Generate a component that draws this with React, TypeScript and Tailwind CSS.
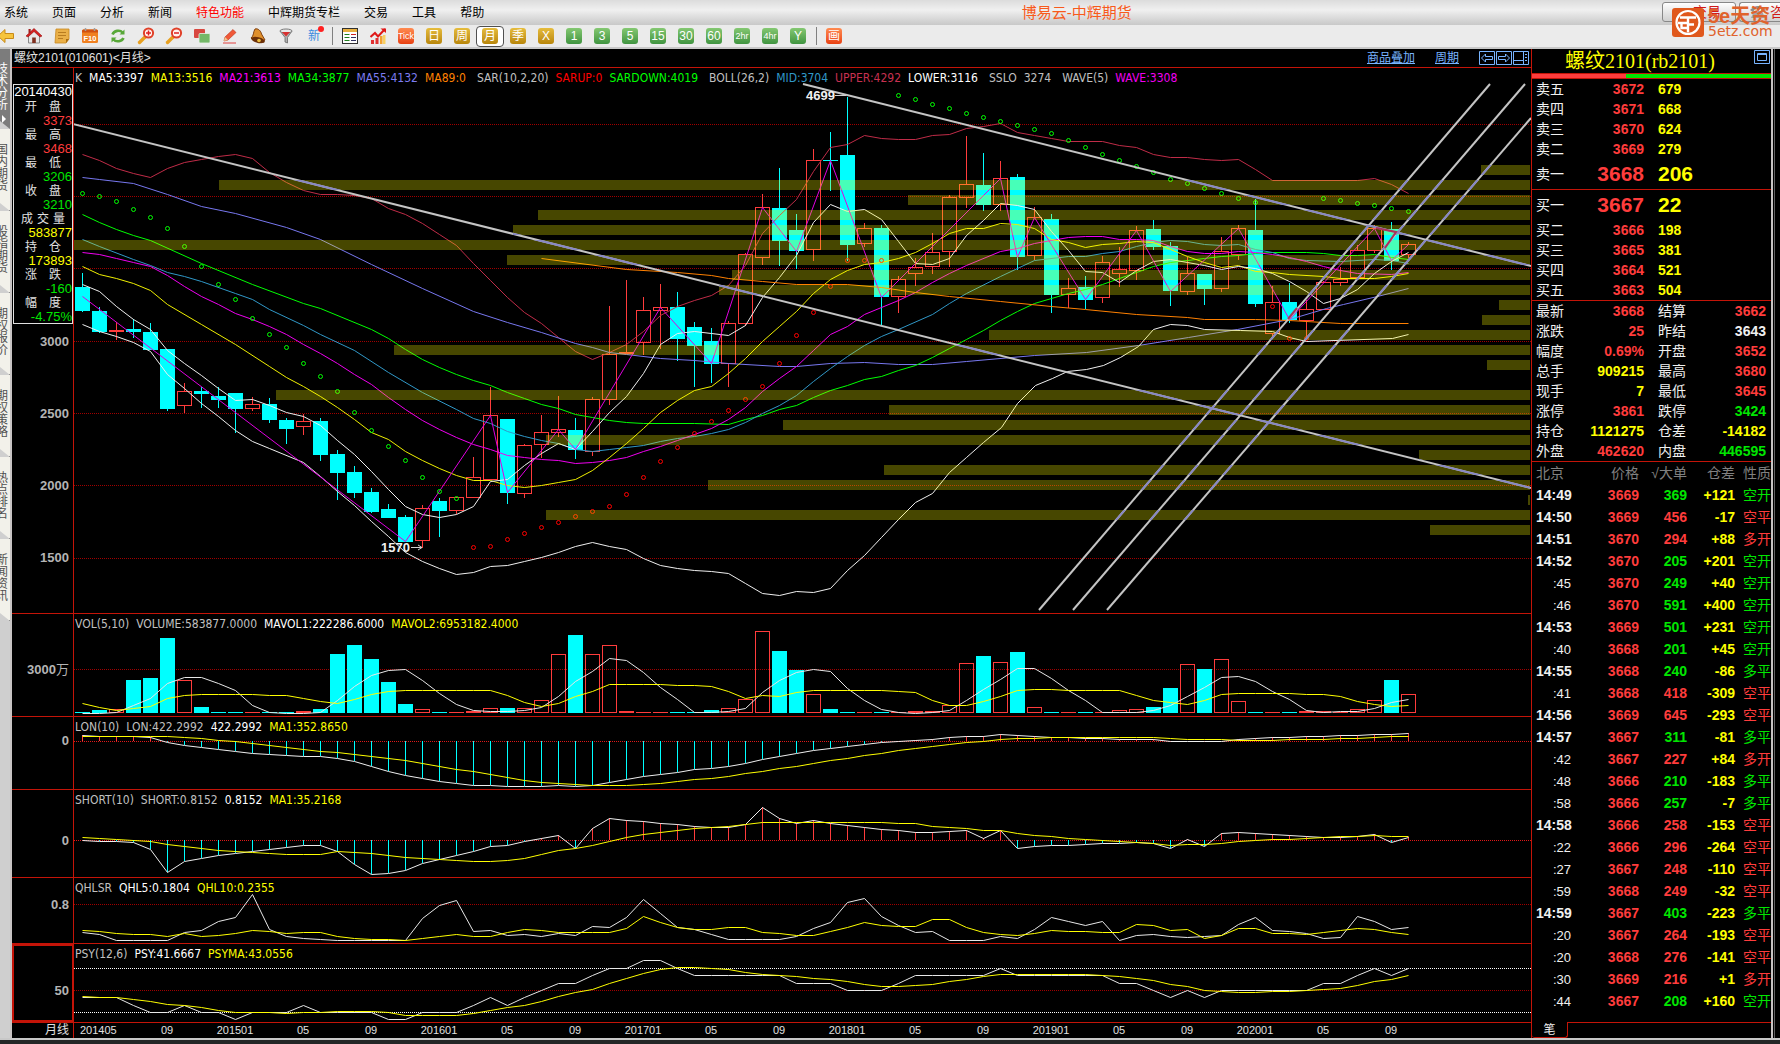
import { ReactNode } from 'react';
import clsx from 'clsx';

type Tone = 'red' | 'green' | 'yellow' | 'white' | 'gray';

interface Legend {
  text: string;
  color: string;
}

// [high, body top, body bottom, low, up = 1 / down = 0]
type Candle = [number, number, number, number, 0 | 1];

const tones: Record<Tone, string> = {
  red: 'text-[#ff3c3c]',
  green: 'text-[#00e600]',
  yellow: 'text-[#ffff00]',
  white: 'text-[#f0f0f0]',
  gray: 'text-[#808080]',
};

const LEFT = 74;
const WIDTH = 1457;
const UP = '#ff3c3c';
const DOWN = '#00ffff';

const xAt = (i: number) => 82 + i * 17;
const toPoints = (ys: number[]) => ys.map((y, i) => `${xAt(i)},${y}`).join(' ');

const candles: Candle[] = [
  [273, 287, 311, 312, 0], [307, 311, 332, 333, 0], [322, 330, 332, 340, 1], [319, 329, 332, 338, 0],
  [323, 332, 350, 350, 0], [349, 349, 409, 411, 0], [383, 391, 406, 413, 1], [387, 391, 394, 408, 0],
  [387, 396, 400, 408, 0], [393, 393, 409, 433, 0], [397, 404, 409, 411, 1], [398, 404, 420, 423, 0],
  [418, 420, 429, 444, 0], [414, 421, 427, 435, 1], [418, 421, 455, 461, 0], [450, 454, 473, 500, 0],
  [466, 472, 493, 498, 0], [488, 492, 512, 513, 0], [504, 509, 518, 518, 0], [515, 517, 542, 542, 0],
  [505, 508, 541, 548, 1], [498, 501, 511, 537, 0], [497, 497, 511, 514, 1], [457, 477, 498, 498, 1],
  [387, 415, 480, 480, 1], [419, 419, 493, 504, 0], [444, 445, 494, 498, 1], [415, 432, 445, 458, 1],
  [396, 429, 433, 437, 1], [418, 430, 450, 459, 0], [397, 399, 452, 456, 1], [306, 354, 400, 405, 1],
  [280, 352, 354, 354, 1], [297, 310, 343, 355, 1], [284, 307, 311, 349, 1], [292, 307, 339, 361, 0],
  [322, 327, 346, 387, 0], [328, 341, 364, 383, 0], [321, 323, 364, 387, 1], [253, 254, 324, 326, 1],
  [194, 207, 258, 265, 1], [168, 208, 241, 266, 0], [214, 230, 251, 269, 0], [149, 160, 250, 261, 1],
  [132, 160, 161, 191, 0], [97, 155, 245, 261, 0], [223, 228, 244, 247, 1], [225, 228, 297, 325, 0],
  [276, 279, 297, 313, 1], [258, 267, 274, 286, 1], [233, 252, 267, 274, 1], [195, 197, 252, 267, 1],
  [136, 184, 198, 208, 1], [153, 185, 205, 211, 0], [161, 178, 205, 211, 1], [174, 177, 257, 270, 0],
  [207, 217, 256, 260, 1], [214, 219, 295, 313, 0], [278, 288, 295, 308, 1], [276, 287, 300, 309, 0],
  [256, 262, 298, 303, 1], [247, 269, 274, 287, 1], [226, 230, 271, 280, 1], [220, 229, 247, 250, 0],
  [242, 246, 291, 306, 0], [257, 273, 292, 295, 1], [274, 274, 289, 305, 0], [237, 251, 289, 292, 1],
  [225, 228, 255, 260, 1], [199, 230, 304, 307, 0], [286, 302, 334, 337, 1], [283, 302, 320, 323, 0],
  [300, 309, 321, 338, 1], [281, 282, 310, 310, 1], [267, 279, 283, 286, 1], [245, 250, 278, 278, 1],
  [225, 228, 251, 253, 1], [222, 229, 261, 270, 0], [242, 244, 255, 258, 1],
];

const profile: [number, number][] = [
  [165, 1481], [180, 219], [195, 908], [210, 538], [225, 513], [240, 74], [255, 507], [270, 732],
  [285, 719], [300, 1499], [315, 1482], [330, 989], [345, 394], [360, 1487], [390, 276], [405, 889],
  [420, 783], [435, 546], [450, 1419], [465, 884], [480, 708], [495, 1528], [510, 546], [525, 1430],
];

const priceLines: { name: string; color: string; points: string }[] = [
  {
    name: 'upper',
    color: '#c02c48',
    points:
      '82,154 99,160 116,168 133,173 150,177 167,168 184,162 201,159 218,156 235,154 252,158 269,172 286,182 303,190 320,194 337,194 354,195 371,198 388,208 405,214 422,223 439,234 456,245 473,263 490,280 507,297 524,312 541,323 558,337 575,351 592,359 609,352 626,344 643,331 660,315 677,306 694,300 711,295 728,285 745,265 762,233 779,215 796,199 813,171 830,147 847,144 864,135 881,138 898,139 915,139 932,135 949,134 966,128 983,126 1000,123 1017,132 1034,135 1051,138 1068,141 1102,141 1119,145 1136,147 1153,154 1170,157 1187,157 1204,159 1221,160 1238,159 1255,169 1272,180 1357,180 1374,178 1391,184 1408,193',
  },
  {
    name: 'ma55',
    color: '#7878f0',
    points:
      '82,177 99,179 133,183 167,194 201,206 235,213 286,227 320,239 371,264 422,288 473,311 507,322 541,332 575,343 592,347 609,352 626,354 660,358 694,360 728,363 779,366 796,366 830,363 864,362 898,364 932,364 966,361 1034,355 1086,352 1138,345 1188,337 1237,329 1289,319 1326,308 1343,304 1377,296 1408,288',
  },
  {
    name: 'ma34',
    color: '#00ff00',
    points:
      '82,214 99,222 116,229 133,235 150,240 201,263 252,284 303,303 320,308 371,329 388,338 405,349 422,359 439,367 456,374 473,380 490,385 507,392 524,398 541,404 558,408 575,414 592,417 609,420 626,422 643,423 694,423 728,424 745,419 762,415 779,409 796,405 813,397 830,390 847,385 864,379 881,376 898,370 915,365 932,357 949,348 966,339 983,330 1000,320 1017,311 1034,303 1051,298 1068,293 1085,289 1102,284 1119,278 1136,272 1153,266 1170,262 1187,260 1204,258 1221,256 1238,255 1255,253 1272,252 1306,252 1323,253 1340,255 1357,255 1374,254 1391,257 1408,259',
  },
  {
    name: 'mid',
    color: '#3098c8',
    points:
      '82,239 99,246 133,259 150,265 167,272 184,276 201,281 235,293 252,299 269,309 303,325 320,334 354,350 388,372 422,392 456,409 473,418 490,423 507,431 524,436 541,440 558,443 575,449 592,451 609,449 626,447 643,445 660,441 677,438 694,436 711,433 728,429 745,422 762,413 779,405 796,395 813,381 830,368 847,356 864,345 881,336 898,329 932,314 949,303 966,293 1000,276 1034,260 1068,256 1085,256 1102,253 1119,251 1136,246 1153,242 1170,240 1187,241 1204,244 1221,245 1238,244 1255,249 1272,252 1289,258 1306,260 1340,261 1374,259 1391,260 1408,263',
  },
  {
    name: 'ma21',
    color: '#f000f0',
    points:
      '82,252 99,254 116,258 133,262 150,266 167,275 184,286 201,296 218,304 235,313 252,319 269,326 286,334 303,344 320,353 337,363 354,374 371,384 388,397 405,409 422,420 439,429 456,437 473,444 490,449 507,455 524,457 541,459 558,460 575,463 592,462 609,460 626,457 643,451 660,446 677,440 694,434 711,428 728,419 745,407 762,391 779,378 796,366 813,350 830,334 847,326 864,314 881,307 898,300 915,292 932,282 949,273 966,265 1000,251 1017,248 1034,243 1051,240 1068,237 1085,236 1102,236 1119,239 1136,239 1153,240 1170,246 1187,251 1204,253 1221,253 1238,251 1255,252 1272,254 1289,257 1306,261 1323,266 1340,270 1357,273 1391,274 1408,272',
  },
  {
    name: 'ma13',
    color: '#f0f000',
    points:
      '82,266 99,274 116,278 133,283 150,290 167,304 201,324 235,344 269,366 286,377 303,386 320,396 337,407 354,419 371,432 388,439 405,451 422,460 439,468 456,475 473,480 490,480 507,485 524,487 541,485 558,482 575,479 592,470 609,457 626,443 643,428 660,412 677,400 694,390 711,386 728,373 745,358 762,341 779,326 796,311 813,293 830,279 847,270 864,264 881,262 898,258 915,252 932,243 949,233 966,228 983,228 1000,223 1017,224 1034,228 1051,239 1068,242 1085,247 1102,244 1119,243 1136,241 1153,242 1170,249 1187,256 1204,262 1221,267 1238,265 1255,271 1272,272 1289,274 1323,276 1340,278 1374,278 1391,276 1408,273',
  },
  {
    name: 'ma5',
    color: '#f0f0f0',
    points:
      '82,284 99,291 116,306 133,319 150,329 167,350 184,363 201,375 218,388 235,400 252,399 269,405 286,412 303,416 320,425 337,440 354,454 371,471 388,489 405,506 422,514 439,517 456,514 473,506 490,481 507,479 524,465 541,453 558,443 575,449 592,431 609,412 626,396 643,373 660,344 677,333 694,331 711,333 728,335 745,325 762,297 779,277 796,255 813,222 830,204 847,211 864,209 881,219 898,241 915,263 932,264 949,258 966,235 983,220 1000,203 1017,205 1034,209 1051,231 1068,250 1085,271 1102,272 1119,282 1136,270 1153,261 1170,259 1187,262 1204,265 1221,269 1238,266 1255,268 1272,273 1289,281 1306,291 1323,303 1340,298 1357,289 1374,273 1391,261 1408,252',
  },
  {
    name: 'lower',
    color: '#f0f0f0',
    points:
      '82,324 99,331 116,336 133,342 150,351 167,374 184,388 201,403 218,416 235,430 252,441 269,448 303,462 320,476 337,491 354,505 371,521 388,536 405,552 422,561 439,568 456,574 473,572 490,566 507,565 524,561 541,557 558,552 575,546 592,542 609,546 626,549 643,558 660,565 677,568 694,570 711,571 728,573 745,583 762,593 779,595 796,591 813,592 830,588 847,570 864,555 881,537 898,519 915,502 932,493 949,472 966,457 983,442 1001,427 1017,403 1035,385 1052,378 1067,371 1086,369 1103,365 1120,357 1138,346 1153,329 1170,324 1187,325 1204,329 1240,330 1272,331 1289,337 1306,341 1392,338 1408,334',
  },
  {
    name: 'ma89',
    color: '#ff8000',
    points:
      '541,258 626,269 677,272 711,275 728,278 762,281 796,284 847,284 881,287 915,292 949,296 1000,301 1051,306 1085,309 1136,314 1187,317 1204,319 1255,319 1289,320 1340,323 1408,323',
  },
  {
    name: 'wave',
    color: '#e000e0',
    points:
      '82,296 405,541 490,415 507,492 558,429 575,449 660,307 711,363 762,207 796,251 830,160 881,297 1000,178 1017,257 1034,217 1085,299 1136,230 1170,291 1238,228 1289,319 1374,228 1391,260 1408,244',
  },
];

const sarRuns: { start: number; color: string; ys: number[] }[] = [
  {
    start: 0,
    color: '#00ff00',
    ys: [193, 196, 201, 209, 217, 228, 246, 266, 284, 299, 318, 334, 347, 363, 376, 391, 412, 430, 446, 460, 477, 491, 498],
  },
  {
    start: 23,
    color: '#ff0000',
    ys: [547, 546, 539, 533, 527, 522, 516, 511, 506, 494, 477, 461, 447, 433, 421, 410, 399, 386, 363, 335, 312, 286, 260, 260, 260],
  },
  {
    start: 48,
    color: '#00ff00',
    ys: [95, 99, 104, 108, 113, 117, 121, 125, 129, 133, 140, 147, 154, 160, 166, 172, 179, 183, 188, 193, 198, 202],
  },
  { start: 70, color: '#ff0000', ys: [306, 338, 338] },
  { start: 73, color: '#00ff00', ys: [198, 200, 203, 205, 208, 211] },
];

const trendLines = [
  'M73 124L1531 488',
  'M803 84L1531 266',
  'M1039 610L1490 84',
  'M1073 610L1525 84',
  'M1107 610L1531 118',
];

const volumeTops = [
  712, 710, 709, 680, 678, 638, 680, 707, 712, 712, 712, 712, 712, 711, 709, 654, 645, 659, 682, 704, 709, 712, 712, 711, 708, 708,
  708, 700, 654, 635, 654, 645, 711, 712, 712, 712, 712, 710, 708, 699, 631, 651, 670, 694, 709, 712, 712, 712, 712, 711, 711, 705,
  663, 656, 662, 652, 707, 712, 712, 712, 712, 710, 709, 707, 688, 664, 669, 659, 701, 712, 712, 712, 711, 711, 712, 709, 700, 680, 694,
];
const mavol1 = [
  713, 713, 712, 705, 698, 683, 677, 677, 683, 690, 705, 712, 713, 713, 712, 700, 686, 675, 670, 669, 680, 693, 704, 710, 711, 711,
  710, 707, 696, 681, 671, 658, 660, 672, 687, 699, 712, 712, 711, 708, 692, 680, 672, 669, 671, 688, 700, 709, 712, 713, 712, 710,
  700, 689, 679, 668, 668, 678, 690, 700, 712, 712, 712, 710, 705, 696, 687, 677, 676, 681, 691, 699, 710, 712, 711, 711, 708, 702, 699,
];
const mavol2 = [
  703, 707, 710, 708, 706, 698, 695, 694, 694, 694, 694, 695, 695, 698, 701, 703, 699, 694, 691, 690, 690, 690, 690, 690, 690, 695,
  702, 706, 703, 696, 691, 684, 684, 684, 684, 685, 685, 686, 691, 698, 695, 696, 692, 690, 690, 690, 690, 690, 691, 692, 700, 705,
  705, 701, 696, 690, 689, 689, 690, 690, 690, 690, 695, 700, 702, 704, 700, 694, 693, 693, 693, 693, 694, 694, 696, 701, 704, 706, 705,
];
const lon = [
  735, 736, 736, 736, 737, 742, 745, 747, 749, 751, 753, 754, 755, 756, 756, 758, 761, 766, 771, 775, 778, 781, 783, 785, 785, 786,
  786, 786, 785, 786, 785, 782, 779, 776, 774, 772, 769, 768, 766, 763, 759, 756, 753, 750, 748, 746, 744, 742, 741, 740, 739, 737,
  736, 736, 734, 735, 736, 737, 737, 738, 738, 739, 739, 739, 741, 741, 741, 741, 739, 738, 737, 737, 736, 736, 735, 735, 734, 734, 733,
];
const lonMa = [
  736, 736, 736, 736, 736, 736, 737, 738, 740, 741, 743, 745, 747, 749, 751, 752, 754, 756, 758, 760, 763, 766, 769, 771, 774, 777,
  780, 782, 783, 784, 785, 785, 785, 784, 783, 781, 779, 778, 776, 773, 771, 768, 766, 763, 760, 758, 755, 753, 750, 748, 746, 744,
  742, 741, 739, 738, 738, 737, 737, 737, 737, 737, 737, 737, 738, 739, 739, 739, 740, 740, 740, 739, 739, 739, 738, 738, 737, 736, 736,
];
const short = [
  840, 841, 841, 842, 849, 872, 861, 858, 855, 853, 851, 849, 847, 845, 845, 851, 864, 874, 873, 870, 863, 859, 855, 851, 846, 845,
  841, 838, 835, 848, 828, 818, 820, 821, 823, 824, 826, 827, 827, 824, 807, 818, 823, 820, 823, 825, 827, 829, 830, 832, 832, 831,
  830, 838, 830, 848, 846, 845, 845, 844, 843, 843, 842, 843, 848, 839, 846, 833, 832, 833, 834, 835, 836, 837, 837, 836, 834, 842, 837,
];
const shortMa = [
  837, 838, 839, 840, 841, 844, 846, 848, 850, 851, 852, 853, 854, 854, 854, 851, 852, 853, 855, 857, 858, 859, 860, 861, 861, 860,
  858, 854, 850, 848, 845, 841, 837, 834, 832, 830, 828, 827, 826, 824, 822, 822, 822, 822, 822, 822, 822, 822, 823, 823, 826, 827,
  828, 830, 830, 833, 835, 836, 838, 839, 840, 841, 842, 843, 845, 844, 844, 843, 841, 840, 839, 839, 838, 837, 836, 836, 835, 836, 836,
];
const qhl5 = [
  932, 934, 940, 940, 940, 940, 932, 930, 921, 917, 894, 929, 936, 938, 939, 940, 940, 940, 940, 940, 918, 905, 900, 931, 930, 935,
  934, 936, 933, 935, 926, 927, 917, 899, 913, 927, 929, 934, 939, 939, 939, 939, 936, 928, 922, 902, 898, 916, 925, 932, 931, 940,
  940, 940, 936, 938, 929, 917, 921, 925, 921, 940, 935, 934, 936, 937, 936, 935, 924, 917, 930, 931, 933, 938, 937, 916, 921, 929, 927,
];
const qhl10 = [
  930, 931, 933, 934, 934, 936, 933, 936, 935, 933, 930, 931, 933, 932, 932, 936, 938, 939, 939, 940, 938, 936, 934, 936, 936, 932,
  929, 930, 932, 932, 932, 932, 928, 916, 922, 927, 929, 929, 927, 927, 932, 933, 935, 935, 931, 927, 922, 925, 926, 926, 919, 919,
  927, 932, 934, 935, 933, 930, 931, 931, 932, 932, 924, 925, 930, 929, 938, 935, 928, 928, 933, 933, 934, 932, 930, 928, 929, 932, 934,
];
const psy = [
  997, 997, 997, 1005, 1012, 1012, 1005, 1012, 1012, 1019, 1012, 1012, 1012, 1005, 1012, 1012, 1012, 1012, 1019, 1019, 1012, 1012,
  1012, 1005, 997, 1005, 997, 990, 983, 983, 975, 968, 968, 960, 960, 968, 975, 975, 975, 975, 975, 975, 983, 983, 983, 990, 990, 990,
  983, 975, 975, 975, 975, 975, 968, 975, 975, 975, 975, 975, 975, 983, 983, 990, 997, 990, 997, 990, 990, 990, 990, 990, 990, 983,
  983, 975, 968, 975, 968,
];
const psyMa = [
  996, 997, 997, 999, 1001, 1004, 1005, 1007, 1010, 1012, 1012, 1012, 1013, 1012, 1012, 1011, 1011, 1011, 1012, 1015, 1015, 1015,
  1015, 1013, 1010, 1007, 1005, 1001, 996, 992, 989, 983, 978, 973, 969, 967, 967, 968, 969, 972, 974, 975, 976, 978, 979, 981, 984,
  986, 986, 985, 984, 981, 979, 976, 974, 974, 974, 974, 974, 974, 975, 976, 978, 980, 984, 986, 990, 991, 992, 992, 991, 991, 990,
  989, 988, 985, 981, 979, 975,
];

const menus = ['系统', '页面', '分析', '新闻', '特色功能', '中辉期货专栏', '交易', '工具', '帮助'];

const sideTabs = ['国内期货', '股指期货', '期权报价', '期权策略', '热点排名', '新闻资讯'];

const infoRows: [string, string, Tone][] = [
  ['开盘', '3373', 'red'],
  ['最高', '3468', 'red'],
  ['最低', '3206', 'green'],
  ['收盘', '3210', 'green'],
  ['成交量', '583877', 'yellow'],
  ['持仓', '173893', 'yellow'],
  ['涨跌', '-160', 'green'],
  ['幅度', '-4.75%', 'green'],
];

const axisLabels = [
  '201405', '09', '201501', '05', '09', '201601', '05', '09', '201701', '05',
  '09', '201801', '05', '09', '201901', '05', '09', '202001', '05', '09',
];

const asks: [string, string, string][] = [
  ['卖五', '3672', '679'],
  ['卖四', '3671', '668'],
  ['卖三', '3670', '624'],
  ['卖二', '3669', '279'],
  ['卖一', '3668', '206'],
];

const bids: [string, string, string][] = [
  ['买一', '3667', '22'],
  ['买二', '3666', '198'],
  ['买三', '3665', '381'],
  ['买四', '3664', '521'],
  ['买五', '3663', '504'],
];

const quotes: [string, string, Tone, string, string, Tone][] = [
  ['最新', '3668', 'red', '结算', '3662', 'red'],
  ['涨跌', '25', 'red', '昨结', '3643', 'white'],
  ['幅度', '0.69%', 'red', '开盘', '3652', 'red'],
  ['总手', '909215', 'yellow', '最高', '3680', 'red'],
  ['现手', '7', 'yellow', '最低', '3645', 'red'],
  ['涨停', '3861', 'red', '跌停', '3424', 'green'],
  ['持仓', '1121275', 'yellow', '仓差', '-14182', 'yellow'],
  ['外盘', '462620', 'red', '内盘', '446595', 'green'],
];

const ticks: [string, string, string, string, string, Tone][] = [
  ['14:49', '3669', '369', '+121', '空开', 'green'],
  ['14:50', '3669', '456', '-17', '空平', 'red'],
  ['14:51', '3670', '294', '+88', '多开', 'red'],
  ['14:52', '3670', '205', '+201', '空开', 'green'],
  [':45', '3670', '249', '+40', '空开', 'green'],
  [':46', '3670', '591', '+400', '空开', 'green'],
  ['14:53', '3669', '501', '+231', '空开', 'green'],
  [':40', '3668', '201', '+45', '空开', 'green'],
  ['14:55', '3668', '240', '-86', '多平', 'green'],
  [':41', '3668', '418', '-309', '空平', 'red'],
  ['14:56', '3669', '645', '-293', '空平', 'red'],
  ['14:57', '3667', '311', '-81', '多平', 'green'],
  [':42', '3667', '227', '+84', '多开', 'red'],
  [':48', '3666', '210', '-183', '多平', 'green'],
  [':58', '3666', '257', '-7', '多平', 'green'],
  ['14:58', '3666', '258', '-153', '空平', 'red'],
  [':22', '3666', '296', '-264', '空平', 'red'],
  [':27', '3667', '248', '-110', '空平', 'red'],
  [':59', '3668', '249', '-32', '空平', 'red'],
  ['14:59', '3667', '403', '-223', '多平', 'green'],
  [':20', '3667', '264', '-193', '空平', 'red'],
  [':20', '3668', '276', '-141', '空平', 'red'],
  [':30', '3669', '216', '+1', '多开', 'red'],
  [':44', '3667', '208', '+160', '空开', 'green'],
];

const priceLegend: Legend[] = [
  { text: 'K', color: 'text-[#c0c0c0]' },
  { text: 'MA5:3397', color: 'text-white' },
  { text: 'MA13:3516', color: 'text-[#ffff00]' },
  { text: 'MA21:3613', color: 'text-[#ff00ff]' },
  { text: 'MA34:3877', color: 'text-[#00ff00]' },
  { text: 'MA55:4132', color: 'text-[#7c7cf0]' },
  { text: 'MA89:0', color: 'text-[#ff8000]' },
  { text: 'SAR(10,2,20)', color: 'text-[#c0c0c0] pl-1' },
  { text: 'SARUP:0', color: 'text-[#ff0000]' },
  { text: 'SARDOWN:4019', color: 'text-[#00ff00]' },
  { text: 'BOLL(26,2)', color: 'text-[#c0c0c0] pl-1' },
  { text: 'MID:3704', color: 'text-[#3098c8]' },
  { text: 'UPPER:4292', color: 'text-[#c83050]' },
  { text: 'LOWER:3116', color: 'text-white' },
  { text: 'SSLO', color: 'text-[#c0c0c0] pl-1' },
  { text: '3274', color: 'text-[#c0c0c0]' },
  { text: 'WAVE(5)', color: 'text-[#c0c0c0] pl-1' },
  { text: 'WAVE:3308', color: 'text-[#f000f0]' },
];

/* ---------- toolbar ---------- */

function ToolButton({ label, active, children }: { label: string; active?: boolean; children: ReactNode }) {
  return (
    <button
      aria-label={label}
      className={clsx(
        'w-7 h-[21px] shrink-0 flex items-center justify-center',
        active && 'bg-white border border-[#505050] rounded-sm'
      )}
    >
      {children}
    </button>
  );
}

function Separator() {
  return (
    <div className="w-2 h-[18px] shrink-0 flex justify-center">
      <div className="w-px bg-[#808080]" />
    </div>
  );
}

const chipColors = {
  gold: 'from-[#e6bc3c] to-[#b88608]',
  green: 'from-[#84c872] to-[#3f9440]',
  orange: 'from-[#ff8a50] to-[#e84010]',
};

function Chip({ text, color }: { text: string; color: keyof typeof chipColors }) {
  return (
    <span
      className={clsx(
        'size-4 rounded-[3px] bg-gradient-to-b text-white leading-4 text-center flex justify-center',
        chipColors[color],
        text.length > 2 ? 'text-[9px]' : 'text-[12px]'
      )}
    >
      {text}
    </span>
  );
}

function Magnifier({ plus }: { plus?: boolean }) {
  return (
    <svg viewBox="0 0 18 18" className="size-[18px]">
      <path d="M8 10L2.5 15.5" stroke="#e8a020" strokeWidth="3.4" strokeLinecap="round" />
      <circle cx="11.5" cy="6" r="4.6" fill="#fff4f0" stroke="#e04028" strokeWidth="2" />
      <path d={plus ? 'M9 6h5M11.500 3.500v5' : 'M9 6h5'} stroke="#e02020" strokeWidth="1.500" />
    </svg>
  );
}

function Toolbar() {
  return (
    <div className="h-6 shrink-0 bg-[#ebebeb] border-b-2 border-[#c8c8c8] flex items-center">
      <button aria-label="后退" className="w-5 shrink-0">
        <svg viewBox="0 0 16 16" className="w-4 h-4">
          <path d="M-2 8L5 1.500V5.500H13.500V10.500H5V14.500Z" fill="#f6c43c" stroke="#c88a18" />
        </svg>
      </button>
      <ToolButton label="首页">
        <svg viewBox="0 0 18 18" className="size-[18px]">
          <path d="M3.500 8.500L9 3.500l5.500 5V16h-11Z" fill="#e8e8e8" stroke="#888" />
          <path d="M1 9L9 1.500L17 9l-2 1L9 4.500L3 10Z" fill="#d82020" stroke="#901010" strokeWidth=".6" />
          <rect x="3.500" y="2" width="2.200" height="4" fill="#a02020" />
          <rect x="7.200" y="10.500" width="3.600" height="5.500" fill="#803020" />
        </svg>
      </ToolButton>
      <ToolButton label="便签">
        <svg viewBox="0 0 16 16" className="size-4">
          <path d="M2 1h13v10l-3 4H1Z" fill="#eab048" stroke="#c88820" strokeWidth=".8" />
          <path d="M15 11l-3 4v-4Z" fill="#a86c10" />
          <path d="M4 4.500h8M4 7.500h8M4 10.500h5" stroke="#b87c20" />
        </svg>
      </ToolButton>
      <ToolButton label="F10">
        <svg viewBox="0 0 16 16" className="size-4">
          <rect y="1.500" width="16" height="13.500" rx="1.500" fill="#f08020" />
          <path d="M0 3q0-1.500 1.500-1.500h13q1.500 0 1.500 1.500v1.500H0Z" fill="#d05010" />
          <path d="M3.500 0v3M12.500 0v3" stroke="#a0a0a0" strokeWidth="1.500" />
          <text x="8" y="12.500" textAnchor="middle" fontSize="7.500" fontWeight="700" fontFamily="Liberation Sans" fill="#fff">
            F10
          </text>
        </svg>
      </ToolButton>
      <ToolButton label="刷新">
        <svg viewBox="0 0 16 16" className="size-4" fill="none" stroke="#58a838" strokeWidth="2.600">
          <path d="M2.500 6.500C4 2.500 10 1.500 12.500 4.500" />
          <path d="M13.500 10C12 13.500 6 14.500 3.500 11.500" />
          <path d="M14.500 1.500v5h-5ZM1.500 14.500v-5h5Z" fill="#58a838" stroke="none" />
        </svg>
      </ToolButton>
      <ToolButton label="放大">
        <Magnifier plus />
      </ToolButton>
      <ToolButton label="缩小">
        <Magnifier />
      </ToolButton>
      <ToolButton label="叠加">
        <svg viewBox="0 0 16 16" className="size-4">
          <rect x="0" y="1" width="11" height="9" rx="1" fill="#d84840" />
          <rect x="5" y="5.500" width="11" height="9.500" rx="1" fill="#74b868" stroke="#e8f0e8" strokeWidth=".8" />
        </svg>
      </ToolButton>
      <ToolButton label="画线">
        <svg viewBox="0 0 16 16" className="size-4">
          <path d="M3 9L11 1.500L14 4.500L6 12L2 13Z" fill="#f05838" stroke="#b83018" strokeWidth=".6" />
          <path d="M3 9l3 3-4 1Z" fill="#f0c890" />
          <path d="M1 15h13" stroke="#e04040" />
        </svg>
      </ToolButton>
      <ToolButton label="预警">
        <svg viewBox="0 0 16 16" className="size-4">
          <path d="M5 1C8 0 11 3 11.500 6L15 12L9 15L1 10C4 8 3 4 5 1Z" fill="#e0902c" stroke="#804010" />
          <ellipse cx="8" cy="12" rx="7" ry="2.800" transform="rotate(14 8 12)" fill="#6c3008" />
          <circle cx="9" cy="12.500" r="1.800" fill="#f0c040" />
        </svg>
      </ToolButton>
      <ToolButton label="筛选">
        <svg viewBox="0 0 16 16" className="size-4">
          <path d="M2 3L7 9.500V14l2.500 1V9.500L14 3Z" fill="#b0b0b0" stroke="#686868" strokeWidth=".8" />
          <ellipse cx="8" cy="3" rx="6" ry="2" fill="#e8e8e8" stroke="#787878" />
          <path d="M4 4h8L8 8.500Z" fill="#d83030" />
        </svg>
      </ToolButton>
      <ToolButton label="新功能">
        <span className="relative text-[12px] leading-4 text-[#3c8ce0]">
          新
          <span className="absolute -top-0.5 -right-1 size-[6px] rounded-full bg-[#ff2020]" />
        </span>
      </ToolButton>
      <Separator />
      <ToolButton label="报价">
        <svg viewBox="0 0 16 16" className="size-4">
          <rect x=".5" y=".5" width="15" height="15" fill="#fff" stroke="#303030" />
          <path d="M1 2.500h14" stroke="#e8b040" strokeWidth="3" />
          <path d="M2.500 6.500h5M2.500 9.500h5M2.500 12.500h5" stroke="#208020" />
          <path d="M9 6.500h5" stroke="#d02020" />
          <path d="M9 9.500h5M9 12.500h5" stroke="#303060" />
        </svg>
      </ToolButton>
      <ToolButton label="走势">
        <svg viewBox="0 0 16 16" className="size-4">
          <path d="M1 16v-4h3v4ZM5.500 16v-6h3v6Z" fill="#e03030" />
          <path d="M10 16v-8h2.500v8Z" fill="#f0a030" />
          <path d="M13 16v-9h2.500v9Z" fill="#f8d060" />
          <path d="M.5 9L5 5l3 3.500L15 1" fill="none" stroke="#e01818" strokeWidth="2" />
          <path d="M10.500.5H16V5Z" fill="#e01818" />
        </svg>
      </ToolButton>
      <ToolButton label="Tick"><Chip text="Tick" color="orange" /></ToolButton>
      <ToolButton label="日线"><Chip text="日" color="gold" /></ToolButton>
      <ToolButton label="周线"><Chip text="周" color="gold" /></ToolButton>
      <ToolButton label="月线" active><Chip text="月" color="gold" /></ToolButton>
      <ToolButton label="季线"><Chip text="季" color="gold" /></ToolButton>
      <ToolButton label="自定义日"><Chip text="X" color="gold" /></ToolButton>
      {['1', '3', '5', '15', '30', '60', '2hr', '4hr', 'Y'].map((t) => (
        <ToolButton key={t} label={t}>
          <Chip text={t} color="green" />
        </ToolButton>
      ))}
      <Separator />
      <ToolButton label="画面"><Chip text="画" color="orange" /></ToolButton>
    </div>
  );
}

function MenuBar() {
  return (
    <header className="relative h-[25px] shrink-0 flex items-center bg-gradient-to-b from-[#dcdcdc] via-[#f0f0f0] via-40% to-[#c8c8c8]">
      <nav className="flex gap-6 pl-1 text-[12px]">
        {menus.map((m) => (
          <button key={m} className={m === '特色功能' ? 'text-[#ff0000]' : 'text-black'}>
            {m}
          </button>
        ))}
      </nav>
      <h1 className="absolute left-[57.400%] text-[15px] leading-6 text-[#f85a1c]">博易云-中辉期货</h1>
      <div className="absolute right-0 top-0.5 flex gap-[3px] text-[14px] leading-[18px] text-[#d01818]">
        <button className="w-[74px] h-5 border border-[#888] rounded-[3px] bg-gradient-to-b from-white to-[#d0d0d0] pl-4">交易</button>
        <button className="w-[41px] h-5 pl-2.5 border border-r-0 border-[#888] rounded-l-[3px] bg-gradient-to-b from-white to-[#d0d0d0] flex items-center gap-1 overflow-hidden whitespace-nowrap">
          <svg viewBox="0 0 16 16" className="size-4 shrink-0">
            <path d="M0 6Q8-2 16 6L13 8L11 5H5L3 8Z" fill="#8c8c8c" />
            <path d="M4 7h8l3 7H1Z" fill="#a4a4a4" />
          </svg>
          咨询
        </button>
      </div>
      {/* watermark logo */}
      <div className="absolute right-1 top-2 z-10 flex gap-1 text-[#e0622c]">
        <svg viewBox="0 0 32 29" className="w-8 h-[29px]">
          <rect width="32" height="29" rx="3" fill="#e0581c" />
          <circle cx="16" cy="14.500" r="11.500" fill="none" stroke="#fff" strokeWidth="2.200" />
          <path d="M8 9.500h16M16 9.500v15M6 15h10M16 16.500h6M9.500 15v5h6.500" fill="none" stroke="#fff" strokeWidth="2.400" />
        </svg>
        <div className="flex flex-col w-[68px]">
          <span className="text-[20px] leading-[17px] font-bold whitespace-nowrap">5e天资</span>
          <span className="text-[14px] leading-[13px] font-['DejaVu_Sans']">5etz.com</span>
        </div>
      </div>
    </header>
  );
}

function SideTabs() {
  return (
    <aside className="w-3 shrink-0 border-r-2 border-[#c8c4c4] bg-[#cfcfcf] text-[12px] leading-3 overflow-hidden">
      <button className="block w-[10px] h-20 pt-2 bg-[#7c7c7c] text-white [clip-path:polygon(0_0,100%_0,100%_100%,0_calc(100%-8px))]">
        <span className="block w-3 -ml-1 break-all">技术分析</span>
        <svg viewBox="0 0 4 8" className="w-1 h-2 mt-1 ml-0.5"><path d="M0 0l4 4-4 4Z" fill="#fff" /></svg>
      </button>
      {sideTabs.map((t) => (
        <button
          key={t}
          className="block w-[10px] h-[82px] pb-1 bg-[#f2f1ea] text-[#505050] border-b border-[#606060] [clip-path:polygon(0_0,100%_0,100%_100%,0_calc(100%-8px))]"
        >
          <span className="block w-3 -ml-1 break-all">{t}</span>
        </button>
      ))}
    </aside>
  );
}

/* ---------- charts ---------- */

function Bar({ i, top, bottom, up }: { i: number; top: number; bottom: number; up: boolean }) {
  const h = Math.max(bottom - top, 1);
  if (!up || h < 3) {
    return <rect x={xAt(i) - 7} y={top} width={15} height={h} fill={up ? UP : DOWN} />;
  }
  return <rect x={xAt(i) - 6.5} y={top + 0.5} width={14} height={h - 1} fill="none" stroke={UP} />;
}

function Grid({ y, color = '#a00000' }: { y: number; color?: string }) {
  return <path d={`M${LEFT} ${y + 0.5}H${LEFT + WIDTH}`} stroke={color} strokeDasharray="1 1" />;
}

function Line({ ys, color }: { ys: number[]; color: string }) {
  return <polyline points={toPoints(ys)} fill="none" stroke={color} transform="translate(.5 .5)" />;
}

function Histogram({ ys, zero }: { ys: number[]; zero: number }) {
  return (
    <g>
      {ys.map((y, i) => (
        <path key={i} d={`M${xAt(i) + 0.5} ${zero}V${y}`} stroke={y < zero ? UP : DOWN} />
      ))}
    </g>
  );
}

interface PanelProps {
  className: string;
  legend: Legend[];
  top: number;
  height: number;
  axis: ReactNode;
  selected?: boolean;
  children: ReactNode;
}

function Panel({ className, legend, top, height, axis, selected, children }: PanelProps) {
  return (
    <section className={clsx('flex min-h-0 border-t border-[#c41408]', className)}>
      <div
        className={clsx(
          "w-[62px] shrink-0 border-r border-[#c41408] text-right text-[13px] leading-4 font-bold text-[#b4b4b4] font-['Liberation_Sans','Noto_Sans_CJK_SC',sans-serif]",
          selected && 'outline-2 -outline-offset-2 outline-[#c41408]'
        )}
      >
        {axis}
      </div>
      <div className="relative flex-1 min-w-0">
        <svg
          viewBox={`${LEFT} ${top} ${WIDTH} ${height}`}
          preserveAspectRatio="none"
          className="absolute inset-0 size-full"
        >
          {children}
        </svg>
        <div className="relative h-5 pl-px flex items-center gap-[7px] text-[12px] whitespace-nowrap overflow-hidden font-['DejaVu_Sans_Condensed','Noto_Sans',sans-serif]">
          {legend.map((l) => (
            <span key={l.text} className={l.color}>{l.text}</span>
          ))}
        </div>
      </div>
    </section>
  );
}

function InfoBox() {
  return (
    <div className="mt-4 ml-px w-[60px] border border-[#e0e0e0] bg-black font-normal">
      <div className="h-[14px] leading-[14px] text-white">20140430</div>
      {infoRows.map(([label, value, tone]) => (
        <div key={label}>
          <div
            className={clsx(
              'h-[15px] flex justify-center text-[12px] leading-[17px] text-[#e0e0e0]',
              label.length === 3 ? 'gap-1' : 'gap-3'
            )}
          >
            {[...label].map((c) => (
              <span key={c}>{c}</span>
            ))}
          </div>
          <div className={clsx('h-[13px] leading-[13px]', tones[tone])}>{value}</div>
        </div>
      ))}
    </div>
  );
}

function PriceAxis() {
  return (
    <div className="flex flex-col">
      <InfoBox />
      <div className="flex flex-col gap-9 pr-1">
        {['3000', '2500', '2000', '1500'].map((v) => (
          <span key={v} className="h-9 leading-9">{v}</span>
        ))}
      </div>
    </div>
  );
}

function PriceChart() {
  return (
    <>
      <defs>
        <clipPath id="profile">
          {profile.map(([y, x]) => (
            <rect key={y} x={x} y={y} width={1530 - x} height={10} />
          ))}
        </clipPath>
      </defs>
      {[124, 196, 268, 341, 413, 485, 558].map((y) => (
        <Grid key={y} y={y} />
      ))}
      {candles.map(([high, top, bottom, low, up], i) => (
        <g key={i}>
          <path d={`M${xAt(i) + 0.5} ${high}V${top}M${xAt(i) + 0.5} ${bottom}V${low}`} stroke={up ? UP : DOWN} />
          <Bar i={i} top={top} bottom={bottom} up={up === 1} />
        </g>
      ))}
      {/* doji wick runs through the body */}
      <path d="M116.500 322V340M626.500 280V354" stroke={UP} />
      <g fill="none" transform="translate(.5 .5)">
        {priceLines.map((l) => (
          <polyline key={l.name} points={l.points} stroke={l.color} />
        ))}
        {sarRuns.map((run) =>
          run.ys.map((y, k) => <circle key={`${run.start}-${k}`} cx={xAt(run.start + k)} cy={y} r={2} stroke={run.color} />)
        )}
      </g>
      <g fill="#ffff00" fillOpacity={0.28}>
        {profile.map(([y, x]) => (
          <rect key={y} x={x} y={y} width={1530 - x} height={10} />
        ))}
      </g>
      <g strokeWidth={2} fill="none">
        {trendLines.map((d) => (
          <path key={d} d={d} stroke="#c4c4c4" />
        ))}
        <g clipPath="url(#profile)">
          {trendLines.map((d) => (
            <path key={d} d={d} stroke="#8888c4" />
          ))}
        </g>
        <path d="M1376 228L1396 232L1385 248M1288 319L1297 308" stroke="#a83458" />
      </g>
      <g fill="#f0f0f0" fontFamily="Liberation Sans" fontWeight="700" fontSize="13">
        <text x="806" y="100">4699</text>
        <text x="381" y="552">1570</text>
      </g>
      <path d="M835 95.500H846M411 547.500H422M418 545l4 2.500l-4 2.500" fill="none" stroke="#d0d0d0" />
    </>
  );
}

function ChartArea() {
  return (
    <main className="flex-1 min-w-0 flex flex-col">
      <div className="h-[18px] shrink-0 pl-0.5 pr-0.5 flex items-center justify-between text-[12px]">
        <span className="text-[#e0e0e0]">{'螺纹2101(010601)<月线>'}</span>
        <div className="flex items-center text-[#78b4ff]">
          <a href="#overlay" className="underline mr-5">商品叠加</a>
          <a href="#period" className="underline mr-5">周期</a>
          <div className="flex gap-px">
            <button aria-label="左移">
              <svg viewBox="0 0 16 14" className="w-4 h-[14px]" fill="none" stroke="#78b4ff">
                <path d="M.5.5h15v13H.5ZM2.500 7l4-4v2.500h7v3h-7V11Z" />
              </svg>
            </button>
            <button aria-label="右移">
              <svg viewBox="0 0 16 14" className="w-4 h-[14px]" fill="none" stroke="#78b4ff">
                <path d="M.5.5h15v13H.5ZM13.500 7l-4-4v2.500h-7v3h7V11Z" />
              </svg>
            </button>
            <button aria-label="布局">
              <svg viewBox="0 0 16 14" className="w-4 h-[14px]" fill="none" stroke="#78b4ff">
                <path d="M.5.5h15v13H.5ZM.5 9.500h10M10.500.5v13M12 3.500h2M12 6.500h2M12 9.500h2" />
              </svg>
            </button>
          </div>
        </div>
      </div>

      <Panel className="flex-[545_545_0%]" legend={priceLegend} top={68} height={545} axis={<PriceAxis />}>
        <PriceChart />
      </Panel>

      <Panel
        className="flex-[102_102_0%]"
        legend={[
          { text: 'VOL(5,10)', color: 'text-[#c0c0c0]' },
          { text: 'VOLUME:583877.0000', color: 'text-[#c0c0c0]' },
          { text: 'MAVOL1:222286.6000', color: 'text-white' },
          { text: 'MAVOL2:6953182.4000', color: 'text-[#ffff00]' },
        ]}
        top={614}
        height={102}
        axis={<div className="pt-12 pr-1">3000<span className="font-normal">万</span></div>}
      >
        <Grid y={669} />
        {volumeTops.map((y, i) => (
          <Bar key={i} i={i} top={y} bottom={713} up={candles[i][4] === 1} />
        ))}
        <Line ys={mavol1} color="#e8e8e8" />
        <Line ys={mavol2} color="#ffff00" />
      </Panel>

      <Panel
        className="flex-[72_72_0%]"
        legend={[
          { text: 'LON(10)', color: 'text-[#c0c0c0]' },
          { text: 'LON:422.2992', color: 'text-[#c0c0c0]' },
          { text: '422.2992', color: 'text-white' },
          { text: 'MA1:352.8650', color: 'text-[#ffff00]' },
        ]}
        top={717}
        height={72}
        axis={<div className="pt-4 pr-1">0</div>}
      >
        <Grid y={741} color="#e01818" />
        <Histogram ys={lon} zero={741} />
        <Line ys={lon} color="#f0f0f0" />
        <Line ys={lonMa} color="#ffff00" />
      </Panel>

      <Panel
        className="flex-[87_87_0%]"
        legend={[
          { text: 'SHORT(10)', color: 'text-[#c0c0c0]' },
          { text: 'SHORT:0.8152', color: 'text-[#c0c0c0]' },
          { text: '0.8152', color: 'text-white' },
          { text: 'MA1:35.2168', color: 'text-[#ffff00]' },
        ]}
        top={790}
        height={87}
        axis={<div className="pt-[43px] pr-1">0</div>}
      >
        <Grid y={840} color="#e01818" />
        <Histogram ys={short} zero={840} />
        <Line ys={short} color="#f0f0f0" />
        <Line ys={shortMa} color="#ffff00" />
      </Panel>

      <Panel
        className="flex-[65_65_0%]"
        legend={[
          { text: 'QHLSR', color: 'text-[#c0c0c0]' },
          { text: 'QHL5:0.1804', color: 'text-white' },
          { text: 'QHL10:0.2355', color: 'text-[#ffff00]' },
        ]}
        top={878}
        height={65}
        axis={<div className="pt-[19px] pr-1">0.8</div>}
      >
        <Grid y={904} />
        <Line ys={qhl5} color="#e8e8e8" />
        <Line ys={qhl10} color="#ffff00" />
      </Panel>

      <Panel
        className="flex-[78_78_0%]"
        legend={[
          { text: 'PSY(12,6)', color: 'text-[#c0c0c0]' },
          { text: 'PSY:41.6667', color: 'text-white' },
          { text: 'PSYMA:43.0556', color: 'text-[#ffff00]' },
        ]}
        top={944}
        height={78}
        axis={<div className="pt-[39px] pr-1">50</div>}
        selected
      >
        <Grid y={968} color="#ffffff" />
        <Grid y={990} />
        <Grid y={1012} color="#ffffff" />
        <Line ys={psy} color="#e8e8e8" />
        <Line ys={psyMa} color="#ffff00" />
      </Panel>

      <div className="h-4 shrink-0 border-t border-[#c41408] flex text-[11px] leading-[15px] text-[#e0e0e0]">
        <div className="w-[62px] shrink-0 border-r border-[#c41408] pr-1 text-right text-[12px]">月线</div>
        {axisLabels.map((l, i) => (
          <div key={i} className={i === 0 ? 'min-w-0 flex-[59_59_0%]' : 'min-w-0 flex-[68_68_0%] text-center'}>
            <span className={clsx(i === 0 && 'pl-1.5')}>{l}</span>
          </div>
        ))}
        <div className="flex-[106_106_0%]" />
      </div>
    </main>
  );
}

/* ---------- quote panel ---------- */

function DepthRow({ row, big }: { row: [string, string, string]; big?: boolean }) {
  const [label, price, volume] = row;
  return (
    <div className={clsx('flex items-center pl-1', big ? 'h-[30px]' : 'h-5')}>
      <span className="w-[47px] text-[#f0f0f0]">{label}</span>
      <span
        className={clsx("w-[61px] text-right font-bold font-['Liberation_Sans'] text-[#ff3c3c]", big && 'text-[21px]')}
      >
        {price}
      </span>
      <span className={clsx("pl-[14px] font-bold font-['Liberation_Sans'] text-[#ffff00]", big && 'text-[21px]')}>
        {volume}
      </span>
    </div>
  );
}

function QuotePanel() {
  return (
    <aside className="w-60 shrink-0 border-l border-[#c41408] flex flex-col text-[14px] leading-5 overflow-hidden">
      <div className="h-6 flex items-center">
        <h2 className="flex-1 pl-[33px] text-[20px] leading-6 text-[#ffff00] font-['Liberation_Serif','Noto_Sans_CJK_SC',serif] whitespace-nowrap">
          螺纹2101(rb2101)
        </h2>
        <button aria-label="展开" className="mr-px mb-2">
          <svg viewBox="0 0 16 14" className="w-4 h-[14px]" fill="none" stroke="#78b4ff">
            <path d="M.5.5h15v13H.5ZM3.500 3.500h9v7h-9ZM3.500 4.500h9" />
          </svg>
        </button>
      </div>
      <div className="h-[6px] border-y border-[#c41408] flex">
        <div className="flex-[94] bg-[#ff3c3c]" />
        <div className="flex-[145] bg-[#00e600]" />
      </div>
      <div className="border-b border-[#c41408]">
        {asks.map((r, i) => (
          <DepthRow key={r[0]} row={r} big={i === 4} />
        ))}
      </div>
      <div className="border-b border-[#c41408]">
        {bids.map((r, i) => (
          <DepthRow key={r[0]} row={r} big={i === 0} />
        ))}
      </div>
      <dl className="border-b border-[#c41408]">
        {quotes.map(([l1, v1, t1, l2, v2, t2]) => (
          <div key={l1} className="flex h-5 pl-1 pr-[5px]">
            <dt className="w-8 text-[#f0f0f0]">{l1}</dt>
            <dd className={clsx("w-[76px] text-right font-bold font-['Liberation_Sans']", tones[t1])}>{v1}</dd>
            <dt className="pl-[14px] text-[#f0f0f0]">{l2}</dt>
            <dd className={clsx("flex-1 text-right font-bold font-['Liberation_Sans']", tones[t2])}>{v2}</dd>
          </div>
        ))}
      </dl>
      <table className="table-fixed w-full whitespace-nowrap">
        <colgroup>
          <col />
          <col className="w-[49px]" />
          <col className="w-12" />
          <col className="w-12" />
          <col className="w-9" />
        </colgroup>
        <thead className="text-[#808080]">
          <tr className="h-[22px]">
            <th className="p-0 pl-1 font-normal text-left">北京</th>
            <th className="p-0 font-normal text-right">价格</th>
            <th className="p-0 font-normal text-right">√大单</th>
            <th className="p-0 font-normal text-right">仓差</th>
            <th className="p-0 pl-2 font-normal text-left">性质</th>
          </tr>
        </thead>
        <tbody>
          {ticks.map(([time, price, volume, diff, kind, tone], i) => (
            <tr key={i} className="h-[22px] font-bold font-['Liberation_Sans','Noto_Sans_CJK_SC',sans-serif]">
              <td className="p-0 pl-1 text-[#f0f0f0]">
                {time.startsWith(':') ? <span className="pl-[17px] text-[13px] font-normal">{time}</span> : time}
              </td>
              <td className="p-0 text-right text-[#ff3c3c]">{price}</td>
              <td className={clsx('p-0 text-right', tones[tone])}>{volume}</td>
              <td className="p-0 text-right text-[#ffff00]">{diff}</td>
              <td className={clsx('p-0 pl-2 font-normal', tones[tone])}>{kind}</td>
            </tr>
          ))}
        </tbody>
      </table>
      <div className="mt-auto h-4 flex">
        <button className="w-9 text-[12px] leading-[14px] text-[#f0f0f0] border-b border-r border-[#c41408] rounded-b-[3px]">笔</button>
        <div className="flex-1 border-t border-[#c41408]" />
      </div>
    </aside>
  );
}

export default function App() {
  return (
    <div className="h-screen flex flex-col bg-black overflow-hidden font-['Liberation_Sans','Noto_Sans_CJK_SC',sans-serif]">
      <MenuBar />
      <Toolbar />
      <div className="flex-1 min-h-0 flex">
        <SideTabs />
        <ChartArea />
        <QuotePanel />
        <div className="w-[9px] shrink-0 border-l-2 border-[#c8c4c4] pl-px">
          <div className="h-full border-l border-[#606060]" />
        </div>
      </div>
      <div className="h-[6px] shrink-0 border-t-2 border-[#c8c8c8] bg-[#242626]" />
    </div>
  );
}
